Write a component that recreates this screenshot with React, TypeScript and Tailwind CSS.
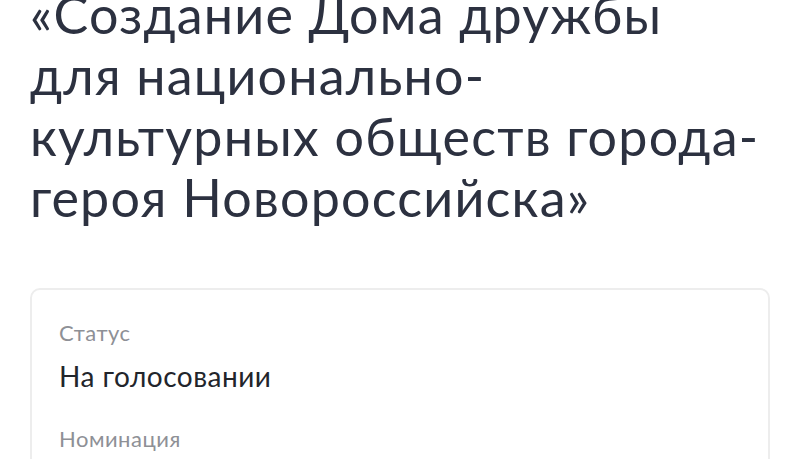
import React from 'react';

const rows = [
  { label: 'Статус', value: 'На голосовании' },
  { label: 'Номинация', value: 'Национально-культурные объединения' },
];

export default function App() {
  return (
    <div className="h-[459px] overflow-hidden bg-white px-[30px] font-['Lato','Liberation_Sans',sans-serif]">
      <h1 className="mt-[-16px] text-[52px] font-normal leading-[61px] tracking-[1.2px] text-[#2c3140]">
        «Создание Дома дружбы
        <br />
        для национально-
        <br />
        культурных обществ города-
        <br />
        героя Новороссийска»
      </h1>

      <div className="mt-[60px] rounded-[10px] border-2 border-[#ededed] px-[27px] pt-[31px]">
        {rows.map((r) => (
          <div key={r.label} className="mb-[35px]">
            <div className="text-[22px] leading-[24px] tracking-[0.5px] text-[#8e9096]">{r.label}</div>
            <div className="mt-[15px] text-[28px] leading-[32px] tracking-[0.5px] text-[#22252b]">{r.value}</div>
          </div>
        ))}
      </div>
    </div>
  );
}
